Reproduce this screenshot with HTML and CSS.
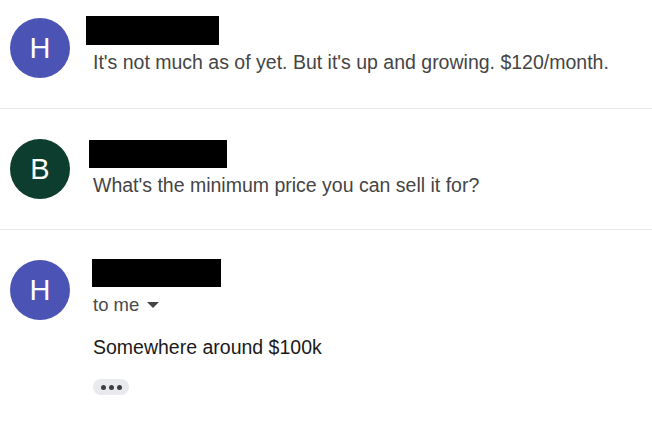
FILE: index.html
```html
<!DOCTYPE html>
<html lang="en">
<head>
    <meta charset="UTF-8">
    <meta name="viewport" content="width=device-width, initial-scale=1.0">
    <title>Conversation</title>
    <link rel="stylesheet" href="styles.css">
</head>
<body>
    <div class="thread">
        <!-- collapsed message -->
        <div class="message">
            <div class="avatar avatar-indigo">H</div>
            <div class="content">
                <div class="redacted redacted-1"></div>
                <p class="snippet">It's not much as of yet. But it's up and growing. $120/month.</p>
            </div>
        </div>

        <div class="message">
            <div class="avatar avatar-green">B</div>
            <div class="content">
                <div class="redacted redacted-2"></div>
                <p class="snippet">What's the minimum price you can sell it for?</p>
            </div>
        </div>

        <!-- expanded message -->
        <div class="message">
            <div class="avatar avatar-indigo">H</div>
            <div class="content">
                <div class="redacted redacted-3"></div>
                <div class="recipients">
                    to me
                    <svg class="caret" width="12" height="6" viewBox="0 0 12 6"><path d="M0 0h12L6 6z" fill="#444"/></svg>
                </div>
                <p class="body-text">Somewhere around $100k</p>
                <button class="more" aria-label="Show trimmed content">
                    <span class="dot"></span><span class="dot"></span><span class="dot"></span>
                </button>
            </div>
        </div>
    </div>
</body>
</html>
```

FILE: styles.css
```css
:root {
    --indigo: #4b53b5;
    --green: #0c3d2f;
    --divider: #e8e8e8;
}

body {
    font-family: "Liberation Sans", Arial, Helvetica, sans-serif;
    background: #fff;
    margin: 0;
}

.message {
    display: flex;
    align-items: flex-start;
    padding: 30px 0 30px 10px;
    border-bottom: 1px solid var(--divider);
}

.message:first-child {
    padding-top: 18px;
}

.message:last-child {
    border-bottom: none;
}

.avatar {
    flex: none;
    width: 60px;
    height: 60px;
    border-radius: 50%;
    color: #fff;
    font-size: 29px;
    line-height: 60px;
    text-align: center;
}

.avatar-indigo {
    background: var(--indigo);
}

.avatar-green {
    background: var(--green);
}

.content {
    margin-left: 23px;
}

.redacted {
    background: #000;
}

.redacted-1 {
    width: 133px;
    height: 29px;
    margin: -2px 0 0 -7px;
}

.redacted-2 {
    width: 138px;
    height: 28px;
    margin: 1px 0 0 -4px;
}

.redacted-3 {
    width: 129px;
    height: 28px;
    margin: -1px 0 0 -1px;
}

.snippet {
    margin: 5px 0 0;
    font-size: 19.5px;
    line-height: 24px;
    color: #454545;
    white-space: nowrap;
}

.recipients {
    display: flex;
    align-items: center;
    margin-top: 7px;
    font-size: 18.5px;
    line-height: 22px;
    color: #4a4a4a;
}

.caret {
    margin-left: 8px;
}

.body-text {
    margin: 19px 0 0;
    font-size: 19.5px;
    line-height: 24px;
    color: #1a1a1a;
}

.more {
    display: flex;
    align-items: center;
    justify-content: center;
    gap: 3px;
    width: 36px;
    height: 16px;
    margin-top: 20px;
    padding: 0;
    border: none;
    border-radius: 8px;
    background: #e8eaed;
}

.dot {
    width: 5px;
    height: 5px;
    border-radius: 50%;
    background: #3c4043;
}
```
